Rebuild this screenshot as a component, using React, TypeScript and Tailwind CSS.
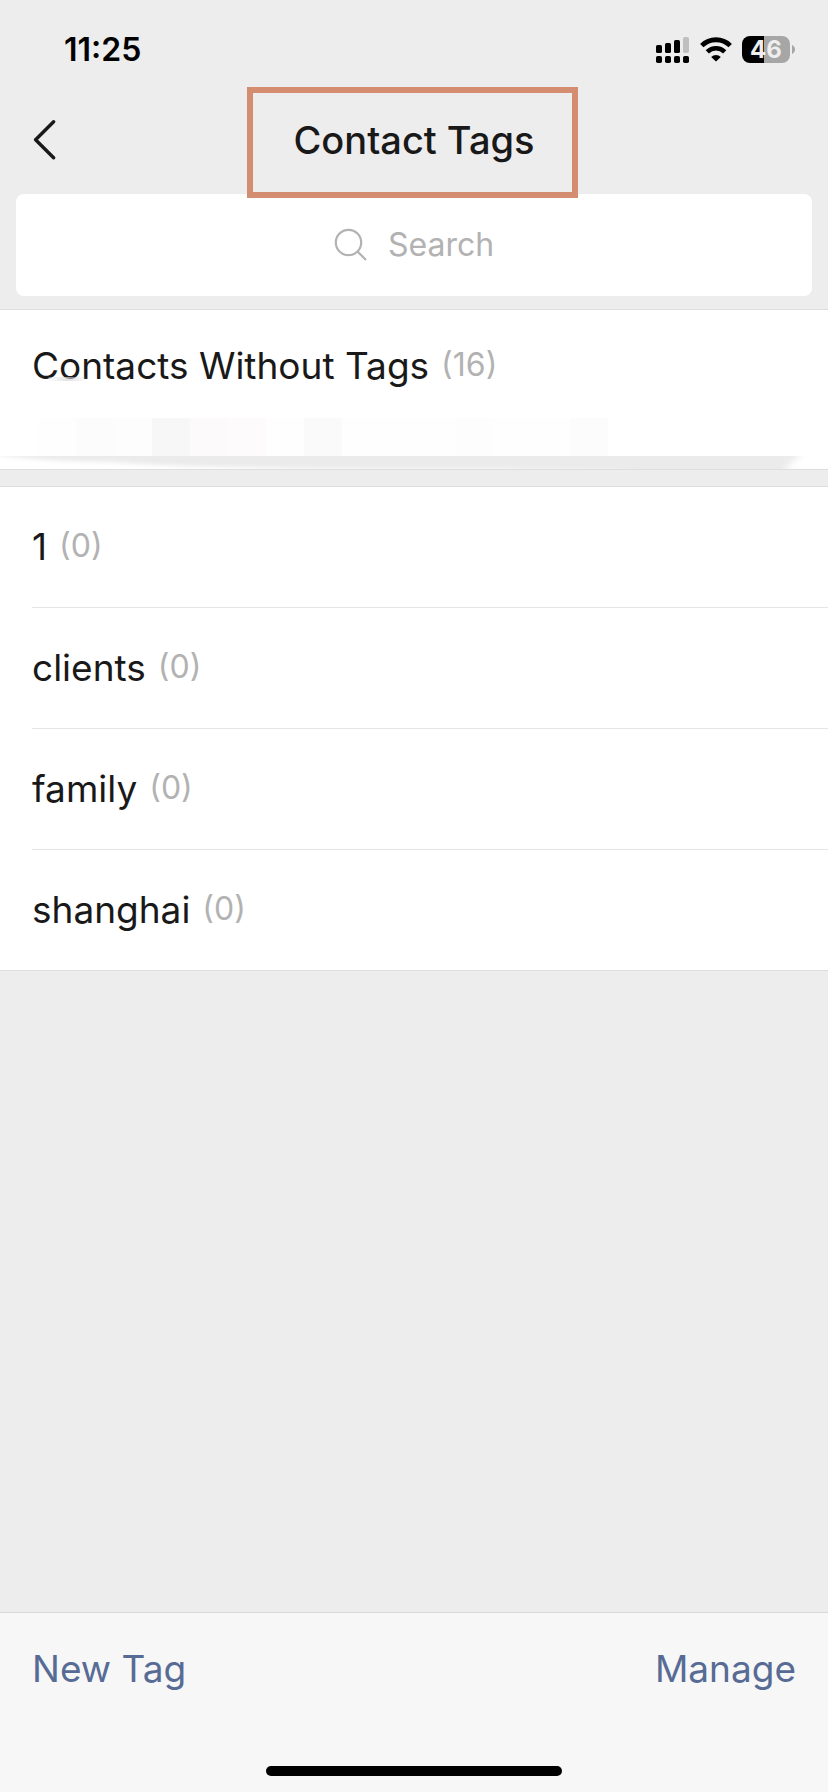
type Tag = { name: string; count: number };

const tags: Tag[] = [
  { name: '1', count: 0 },
  { name: 'clients', count: 0 },
  { name: 'family', count: 0 },
  { name: 'shanghai', count: 0 },
];

// Pixelated name strip, one colour per 38px cell
const mosaic = [
  '#ffffff', '#fefefe', '#fcfcfc', '#fdfdfd', '#f7f7f7', '#fcfafa', '#fdfbfc', '#fefefe',
  '#fafafa', '#fefefe', '#fefefe', '#fefefe', '#fdfdfd', '#fefefe', '#fefefe', '#fcfcfc',
];

function SignalIcon() {
  return (
    <svg width="34" height="28" viewBox="0 0 34 28" aria-hidden="true">
      <rect x="0" y="9" width="6" height="8" rx="1.6" />
      <rect x="9" y="7" width="6" height="10" rx="1.6" />
      <rect x="18" y="4" width="6" height="13" rx="1.6" />
      <rect x="27" y="1" width="6" height="16" rx="1.8" fill="#bfbfbf" />
      <rect x="0" y="20" width="6" height="7" rx="1.8" />
      <rect x="9" y="20" width="6" height="7" rx="1.8" />
      <rect x="18" y="20" width="6" height="7" rx="1.8" />
      <rect x="27" y="20" width="6" height="7" rx="1.8" />
    </svg>
  );
}

function WifiIcon() {
  return (
    <svg width="32" height="25" viewBox="0 0 32 25" fill="none" stroke="#000" aria-hidden="true">
      <path d="M1.8 8.6a20.2 20.2 0 0 1 28.4 0" strokeWidth="4.8" />
      <path d="M7.3 14.8a12.4 12.4 0 0 1 17.4 0" strokeWidth="4.6" />
      <path d="M16 24.6l-4.8-4.6a6.8 6.800 0 0 1 9.600 0z" fill="#000" stroke="none" />
    </svg>
  );
}

function Battery() {
  return (
    <div className="flex items-center gap-0.5">
      <div className="flex h-[27px] w-12 items-center justify-center rounded-lg bg-linear-to-r from-black from-46% to-[#a6a6a6] to-46% text-2xl leading-none font-bold text-[#eeeeee]">
        46
      </div>
      <svg width="3" height="9" viewBox="0 0 3 9" fill="#a6a6a6" aria-hidden="true">
        <path d="M0 0c1.8.9 3 2.6 3 4.5s-1.2 3.600-3 4.500z" />
      </svg>
    </div>
  );
}

function StatusBar() {
  return (
    <div className="flex h-[87px] items-center justify-between pt-3 pr-[33px] pl-16">
      <span className="text-[32px] leading-none font-semibold text-black">11:25</span>
      <div className="flex items-center gap-2.5">
        <SignalIcon />
        <WifiIcon />
        <Battery />
      </div>
    </div>
  );
}

function NavBar() {
  return (
    <header className="relative z-10 -mb-1 grid grid-cols-[1fr_331px_1fr] items-center pr-1">
      <button type="button" aria-label="Back" className="ml-8 w-8 pb-1.5">
        <svg width="24" height="40" viewBox="0 0 24 40" fill="none" stroke="#191919" strokeWidth="3.4" strokeLinecap="round" strokeLinejoin="round" aria-hidden="true">
          <path d="M21.6 1.8L3.6 19.8L21.6 37.8" />
        </svg>
      </button>
      <div className="flex h-[111px] items-center justify-center border-6 border-[#d48d70] pb-1.5 pl-1">
        <h1 className="text-[38px] leading-none font-medium whitespace-nowrap">Contact Tags</h1>
      </div>
    </header>
  );
}

function SearchBox() {
  return (
    <div className="px-4 pb-[13px]">
      <label className="flex h-[102px] items-center justify-center gap-5 rounded-lg bg-white">
        <svg width="34" height="34" viewBox="0 0 34 34" fill="none" stroke="#b2b2b2" strokeWidth="2.2" aria-hidden="true">
          <circle cx="14.5" cy="14.5" r="12.7" />
          <path d="M23.5 23.5L32 32" />
        </svg>
        <input
          type="text"
          aria-label="Search"
          placeholder="Search"
          className="w-[106px] bg-transparent text-[32px] outline-none placeholder:text-[#b2b2b2]"
        />
      </label>
    </div>
  );
}

function TagLabel({ name, count }: Tag) {
  return (
    <>
      <span className="text-[37px] leading-none">{name}</span>
      <span className="text-[32px] leading-none text-[#b2b2b2]">({count})</span>
    </>
  );
}

function UntaggedContacts() {
  return (
    <section className="border-y border-[#dedede] bg-white">
      <button type="button" className="relative flex h-[108px] w-full items-center gap-3 pt-0.5 pl-8 text-left">
        <TagLabel name="Contacts Without Tags" count={16} />
        <span className="absolute top-[67px] left-12 h-1 w-10 rounded-full bg-linear-to-r from-white/40 via-neutral-300/70 to-white/0" />
      </button>
      <div className="flex h-[38px]">
        {mosaic.map((color, i) => (
          <span key={i} className="w-[38px]" style={{ backgroundColor: color }} />
        ))}
      </div>
      <svg className="block h-[13px] w-full" viewBox="0 0 828 13" preserveAspectRatio="none" aria-hidden="true">
        <defs>
          <filter id="smear" x="-5%" y="-60%" width="110%" height="220%">
            <feGaussianBlur stdDeviation="5 2" />
          </filter>
        </defs>
        <rect width="828" height="13" fill="#ebebeb" />
        <path d="M-20 -8L2 -1Q30 5 110 6Q190 13 420 13Q560 13 650 16L-20 20Z" fill="#fff" filter="url(#smear)" />
        <path d="M800 -2L784 15H860V-4H802Z" fill="#fff" filter="url(#smear)" />
      </svg>
    </section>
  );
}

function TagList() {
  return (
    <ul className="mt-4 border-y border-[#dedede] bg-white pl-8">
      {tags.map((tag) => (
        <li key={tag.name} className="border-b border-[#e5e5e5] last:border-b-0">
          <button type="button" className="flex h-[120px] w-full items-center gap-3 pb-0.5 text-left">
            <TagLabel {...tag} />
          </button>
        </li>
      ))}
    </ul>
  );
}

export default function App() {
  return (
    <div className="flex min-h-screen flex-col bg-[#ededed] font-[Inter,'Liberation_Sans',sans-serif] text-[#191919]">
      <StatusBar />
      <NavBar />
      <SearchBox />
      <main className="flex-1">
        <UntaggedContacts />
        <TagList />
      </main>
      <footer className="flex h-[180px] flex-col justify-between border-t border-[#d9d9d9] bg-[#f7f7f7] pb-4">
        <div className="flex justify-between px-8 pt-8 text-[37px] leading-12 text-[#576b95]">
          <button type="button">New Tag</button>
          <button type="button">Manage</button>
        </div>
        <div className="mx-auto h-2.5 w-[296px] rounded-full bg-black" />
      </footer>
    </div>
  );
}
